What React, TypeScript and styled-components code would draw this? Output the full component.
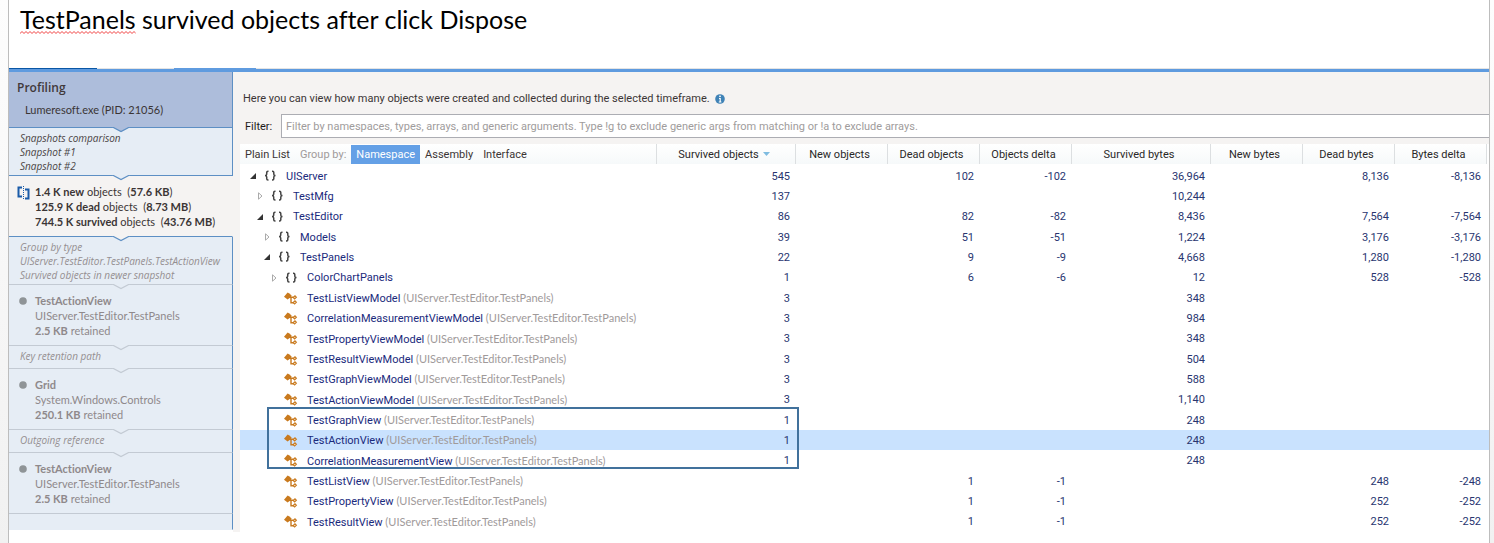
import React from "react";
import styled, { createGlobalStyle } from "styled-components";

const GlobalStyle = createGlobalStyle`
  *, *::before, *::after { box-sizing: border-box; }
  body {
    margin: 0;
    background: linear-gradient(#fdfdfd, #f1f1f1);
    color: #3b3535;
    font: 11px/15px Roboto, "Open Sans", sans-serif;
    font-variant-ligatures: none;
  }
  button, input { font: inherit; color: inherit; }
`;

const Slide = styled.div`
  min-height: 100vh;
  margin: 0 4px 0 8px;
  background: #fff;
  border: solid #bdbdbd;
  border-width: 0 1px;
`;

const TitleBar = styled.header`
  height: 68px;
  padding: 3px 11px;
`;

const Title = styled.h1`
  margin: 0;
  color: #000;
  font: 400 25px/32px Lato, "Open Sans", sans-serif;
  font-variant-ligatures: none;
`;

const Misspelled = styled.span`
  position: relative;
`;

const Squiggle = styled.svg`
  position: absolute;
  left: 0;
  bottom: 0;
  width: 100%;
  height: 3px;
`;

const TabStrip = styled.div`
  display: flex;
  height: 4px;
  background: #e4e4e4;
  border-bottom: 3px solid #5f9bdf;
`;

const TabMark = styled.span<{ $color: string; $width: number }>`
  width: ${(p) => p.$width}px;
  background: ${(p) => p.$color};
`;

const Workspace = styled.div`
  display: flex;
  align-items: flex-start;
`;

const Sidebar = styled.aside`
  flex: 0 0 224px;
`;

type Tone = "head" | "step" | "current";

const toneFill: Record<Tone, string> = {
  head: "#adbddb",
  step: "#e6edf5",
  current: "#f5f3f2",
};

const Step = styled.section<{ $tone: Tone; $height: number; $line: string }>`
  position: relative;
  height: ${(p) => p.$height}px;
  background: ${(p) => toneFill[p.$tone]};
  border-bottom: 1px solid ${(p) => p.$line};
  border-right: 1px solid ${(p) => (p.$tone === "current" ? toneFill.current : "#5d8fc4")};
`;

const Notch = styled.svg`
  position: absolute;
  z-index: 1;
  left: 50%;
  top: 100%;
  width: 20px;
  height: 6px;
  margin-left: -10px;
`;

const Caption = styled.p<{ $muted?: boolean }>`
  margin: 0;
  padding: 3px 11px;
  color: ${(p) => (p.$muted ? "#958f91" : "#4a4444")};
  font-family: "Open Sans", sans-serif;
  font-size: 10px;
  line-height: 14px;
  font-style: italic;
  white-space: nowrap;
`;

const ProfileTitle = styled.h2`
  margin: 0;
  padding: 7px 8px 0;
  color: #40383a;
  font: 600 12px/18px "Open Sans", sans-serif;
`;

const ProfileName = styled.p`
  margin: 0;
  padding: 5px 16px;
  font-family: Lato, "Open Sans", sans-serif;
`;

const Detail = styled.div<{ $muted?: boolean }>`
  display: flex;
  padding: 8px 8px 0;
  color: ${(p) => (p.$muted ? "#8f898b" : "#3b3535")};
  font-family: Lato, "Open Sans", sans-serif;
  white-space: nowrap;

  p { margin: 0; }
  b { font-weight: 700; }
`;

const Marker = styled.span`
  flex: 0 0 18px;
  padding: 2px 0;
  line-height: 0;
`;

const MarkerDot = styled.svg`
  margin-left: 2px;
`;

const Main = styled.main`
  flex: 1;
  min-width: 0;
  padding-left: 7px;
  background: #f5f3f2;
`;

const Hint = styled.p`
  display: flex;
  align-items: center;
  gap: 5px;
  margin: 0;
  padding: 19px 3px 8px;
`;

const FilterRow = styled.div`
  display: flex;
  align-items: center;
  padding-left: 5px;
  margin-bottom: 6px;
`;

const FilterLabel = styled.label`
  width: 36px;
  color: #1c1a1a;
`;

const FilterInput = styled.input`
  flex: 1;
  height: 24px;
  padding: 0 4px;
  background: #fff;
  border: 1px solid #acadb3;
  border-right: 0;
  border-radius: 0;
  outline: 0;

  &::placeholder { color: #a09c9c; opacity: 1; }
`;

const GridArea = styled.div`
  position: relative;
  background: #fff;
`;

const Grid = styled.table`
  width: 100%;
  table-layout: fixed;
  border-collapse: collapse;
  white-space: nowrap;
`;

const Col = styled.col<{ $width?: number }>`
  width: ${(p) => (p.$width ? `${p.$width}px` : "auto")};
`;

const HeadCell = styled.th`
  padding: 0 0 2px;
  font-weight: 400;
`;

const HeadInner = styled.div<{ $tools?: boolean }>`
  display: flex;
  align-items: center;
  justify-content: ${(p) => (p.$tools ? "flex-start" : "center")};
  height: 20px;
  padding-right: 4px;
  background: linear-gradient(#fff, #f6f9fa);
  border-right: 1px solid #dcdfe1;
`;

const SortButton = styled.button`
  display: flex;
  align-items: center;
  gap: 4px;
  padding: 0;
  background: none;
  border: 0;
  color: #2a2828;
`;

const ModeButton = styled.button<{ $active?: boolean }>`
  height: 19px;
  padding: 0 5px;
  border: 0;
  background: ${(p) => (p.$active ? "#64a0e6" : "transparent")};
  color: ${(p) => (p.$active ? "#fff" : "#3b3535")};
`;

const GroupLabel = styled.span`
  padding: 0 5px;
  color: #a09a9a;
`;

const Row = styled.tr<{ $selected?: boolean }>`
  height: 20px;
  background: ${(p) => (p.$selected ? "#c9e2fe" : "transparent")};

  &:nth-child(3n) { height: 21px; }
`;

const NameCell = styled.td`
  padding: 0;
`;

const NameInner = styled.div<{ $level: number }>`
  display: flex;
  align-items: center;
  padding-left: ${(p) => 9 + p.$level * 7}px;
  color: #1a2a7c;
`;

const Expander = styled.button`
  flex: 0 0 14px;
  height: 12px;
  padding: 0;
  border: 0;
  background: none;
  line-height: 0;
  text-align: left;
`;

const Spacer = styled.span`
  flex: 0 0 14px;
`;

const IconSlot = styled.span`
  flex: 0 0 23px;
  line-height: 0;
`;

const Scope = styled.span`
  color: #a09a9a;
  font-family: Lato, "Open Sans", sans-serif;
`;

const ValueCell = styled.td`
  padding: 0 6px 0 0;
  text-align: right;
  color: #28356f;
`;

const Callout = styled.div`
  position: absolute;
  left: 27px;
  top: 263px;
  width: 532px;
  height: 62px;
  border: 2px solid #41719c;
  pointer-events: none;
`;

const BLUE = "#5d8fc4";
const GREY = "#c3cad3";

function StepBlock({ tone = "step", height, line = GREY, last, children }: {
  tone?: Tone; height: number; line?: string; last?: boolean; children: React.ReactNode;
}) {
  return (
    <Step $tone={tone} $height={height} $line={line}>
      {children}
      {!last && (
        <Notch viewBox="0 0 20 6" aria-hidden="true">
          <path d="M0 -1H20L19 0L10 5L1 0L0 -1Z" fill={toneFill[tone]} />
          <path d="M0.5 -0.5L10 4.6L19.5 -0.5" fill="none" stroke={line} strokeWidth="1.2" />
        </Notch>
      )}
    </Step>
  );
}

const Dot = () => (
  <MarkerDot width="8" height="11" viewBox="0 0 8 11" aria-hidden="true">
    <circle cx="4" cy="6" r="3.8" fill="#8f9497" />
  </MarkerDot>
);

const CompareIcon = () => (
  <svg width="13" height="14" viewBox="0 0 13 14" aria-hidden="true">
    <path d="M5 1.5H1.5V10.5H5" fill="none" stroke="#1a5ba8" strokeWidth="2" />
    <path d="M8 3.5H11.5V12.5H8" fill="none" stroke="#1a5ba8" strokeWidth="2" />
    <path d="M6.5 0V14" stroke="#1a5ba8" strokeDasharray="1 1" />
  </svg>
);

const InfoIcon = () => (
  <svg width="10" height="10" viewBox="0 0 10 10" aria-hidden="true">
    <circle cx="5" cy="5" r="4.8" fill="#3f82b6" />
    <path d="M4 4.5H5.2V8M3.8 8H6.4" fill="none" stroke="#fff" strokeWidth="1.2" />
    <rect x="4.2" y="1.6" width="1.6" height="1.5" fill="#fff" />
  </svg>
);

const SortArrow = () => (
  <svg width="7" height="5" viewBox="0 0 7 5" aria-hidden="true">
    <path d="M0 0H7L3.5 4Z" fill="#7fbce0" />
  </svg>
);

const OpenArrow = () => (
  <svg width="8" height="12" viewBox="0 0 8 12" aria-hidden="true">
    <path d="M7 3V9H1Z" fill="#333" />
  </svg>
);

const ClosedArrow = () => (
  <svg width="8" height="12" viewBox="0 0 8 12" aria-hidden="true">
    <path d="M2.5 2.8V9.2L6 6Z" fill="#fff" stroke="#aaa" />
  </svg>
);

const NamespaceIcon = () => (
  <svg width="14" height="12" viewBox="0 0 14 12" fill="none" stroke="#444" strokeWidth="1.5" aria-hidden="true">
    <path d="M5.5 1.2H5Q3.7 1.2 3.7 2.4V4.2Q3.7 5.5 2 5.5Q3.7 5.5 3.7 7V8.8Q3.7 10 5 10H5.5" />
    <path d="M9 1.2H9.5Q10.8 1.2 10.8 2.4V4.2Q10.8 5.5 12.5 5.5Q10.8 5.5 10.8 7V8.8Q10.8 10 9.5 10H9" />
  </svg>
);

const ClassIcon = () => (
  <svg width="14" height="13" viewBox="1 0 14 13" aria-hidden="true">
    <path d="M1 4.8L4.6 0.6L6.4 1.4L8.6 3.4L8 5L4.6 7.6Z" fill="#c97a1e" />
    <path d="M5 5.2H10.5M8 5V10.8H11" fill="none" stroke="#c97a1e" strokeWidth="1.4" />
    <path d="M9.4 5.4L12 2.9L14.2 5.2L11.6 7.7ZM9.4 10.5L12 8L14.2 10.3L11.6 12.8Z" fill="#c97a1e" />
    <path d="M11.1 5.5L12 4.7L12.6 5.3L11.7 6.1ZM11.1 10.6L12 9.8L12.6 10.4L11.7 11.2Z" fill="#fff" />
  </svg>
);

interface Entry {
  name: string;
  level: number;
  kind: "open" | "closed" | "class";
  values: string[];
  selected?: boolean;
}

const cls = (name: string, values: string[], selected = false): Entry =>
  ({ name, level: 3, kind: "class", values, selected });

const entries: Entry[] = [
  { name: "UIServer", level: 0, kind: "open", values: ["545", "", "102", "-102", "36,964", "", "8,136", "-8,136"] },
  { name: "TestMfg", level: 1, kind: "closed", values: ["137", "", "", "", "10,244", "", "", ""] },
  { name: "TestEditor", level: 1, kind: "open", values: ["86", "", "82", "-82", "8,436", "", "7,564", "-7,564"] },
  { name: "Models", level: 2, kind: "closed", values: ["39", "", "51", "-51", "1,224", "", "3,176", "-3,176"] },
  { name: "TestPanels", level: 2, kind: "open", values: ["22", "", "9", "-9", "4,668", "", "1,280", "-1,280"] },
  { name: "ColorChartPanels", level: 3, kind: "closed", values: ["1", "", "6", "-6", "12", "", "528", "-528"] },
  cls("TestListViewModel", ["3", "", "", "", "348", "", "", ""]),
  cls("CorrelationMeasurementViewModel", ["3", "", "", "", "984", "", "", ""]),
  cls("TestPropertyViewModel", ["3", "", "", "", "348", "", "", ""]),
  cls("TestResultViewModel", ["3", "", "", "", "504", "", "", ""]),
  cls("TestGraphViewModel", ["3", "", "", "", "588", "", "", ""]),
  cls("TestActionViewModel", ["3", "", "", "", "1,140", "", "", ""]),
  cls("TestGraphView", ["1", "", "", "", "248", "", "", ""]),
  cls("TestActionView", ["1", "", "", "", "248", "", "", ""], true),
  cls("CorrelationMeasurementView", ["1", "", "", "", "248", "", "", ""]),
  cls("TestListView", ["", "", "1", "-1", "", "", "248", "-248"]),
  cls("TestPropertyView", ["", "", "1", "-1", "", "", "252", "-252"]),
  cls("TestResultView", ["", "", "1", "-1", "", "", "252", "-252"]),
];

const columns = [
  { title: "Survived objects", width: 139 },
  { title: "New objects", width: 92 },
  { title: "Dead objects", width: 92 },
  { title: "Objects delta", width: 92 },
  { title: "Survived bytes", width: 139 },
  { title: "New bytes", width: 92 },
  { title: "Dead bytes", width: 92 },
  { title: "Bytes delta", width: 92 },
];

function Retained({ name, scope, size }: { name: string; scope: string; size: string }) {
  return (
    <Detail $muted>
      <Marker><Dot /></Marker>
      <div>
        <p><b>{name}</b></p>
        <p>{scope}</p>
        <p><b>{size}</b> retained</p>
      </div>
    </Detail>
  );
}

function History() {
  return (
    <Sidebar>
      <StepBlock tone="head" height={56} line={BLUE}>
        <ProfileTitle>Profiling</ProfileTitle>
        <ProfileName>Lumeresoft.exe (PID: 21056)</ProfileName>
      </StepBlock>
      <StepBlock height={48} line={BLUE}>
        <Caption>Snapshots comparison<br />Snapshot #1<br />Snapshot #2</Caption>
      </StepBlock>
      <StepBlock tone="current" height={61} line={BLUE}>
        <Detail>
          <Marker><CompareIcon /></Marker>
          <div>
            <p><b>1.4 K new</b> objects &nbsp;(<b>57.6 KB</b>)</p>
            <p><b>125.9 K dead</b> objects &nbsp;(<b>8.73 MB</b>)</p>
            <p><b>744.5 K survived</b> objects &nbsp;(<b>43.76 MB</b>)</p>
          </div>
        </Detail>
      </StepBlock>
      <StepBlock height={48}>
        <Caption $muted>
          Group by type<br />UIServer.TestEditor.TestPanels.TestActionView<br />Survived objects in newer snapshot
        </Caption>
      </StepBlock>
      <StepBlock height={61}>
        <Retained name="TestActionView" scope="UIServer.TestEditor.TestPanels" size="2.5 KB" />
      </StepBlock>
      <StepBlock height={23}>
        <Caption $muted>Key retention path</Caption>
      </StepBlock>
      <StepBlock height={61}>
        <Retained name="Grid" scope="System.Windows.Controls" size="250.1 KB" />
      </StepBlock>
      <StepBlock height={23}>
        <Caption $muted>Outgoing reference</Caption>
      </StepBlock>
      <StepBlock height={61} last>
        <Retained name="TestActionView" scope="UIServer.TestEditor.TestPanels" size="2.5 KB" />
      </StepBlock>
      <StepBlock height={16} line={toneFill.step} last>{null}</StepBlock>
    </Sidebar>
  );
}

function EntryRow({ entry }: { entry: Entry }) {
  const isClass = entry.kind === "class";
  return (
    <Row $selected={entry.selected}>
      <NameCell>
        <NameInner $level={entry.level}>
          {isClass ? <Spacer /> : (
            <Expander aria-label={`Toggle ${entry.name}`} aria-expanded={entry.kind === "open"}>
              {entry.kind === "open" ? <OpenArrow /> : <ClosedArrow />}
            </Expander>
          )}
          <IconSlot>{isClass ? <ClassIcon /> : <NamespaceIcon />}</IconSlot>
          <span>
            {entry.name}
            {isClass && <Scope> (UIServer.TestEditor.TestPanels)</Scope>}
          </span>
        </NameInner>
      </NameCell>
      {entry.values.map((value, i) => <ValueCell key={i}>{value}</ValueCell>)}
      <td />
    </Row>
  );
}

export default function App() {
  return (
    <>
      <GlobalStyle />
      <Slide>
        <TitleBar>
          <Title>
            <Misspelled>
              TestPanels
              <Squiggle aria-hidden="true">
                <defs>
                  <pattern id="wave" width="4" height="3" patternUnits="userSpaceOnUse">
                    <path d="M-1 1.5L0 2.5L2 0.5L4 2.5L5 1.5" fill="none" stroke="#f04040" />
                  </pattern>
                </defs>
                <rect width="100%" height="3" fill="url(#wave)" />
              </Squiggle>
            </Misspelled>{" "}
            survived objects after click Dispose
          </Title>
        </TitleBar>
        <TabStrip>
          <TabMark $color="#0a57a5" $width={88} />
          <TabMark $color="transparent" $width={77} />
          <TabMark $color="#5f9bdf" $width={82} />
        </TabStrip>
        <Workspace>
          <History />
          <Main>
            <Hint>
              Here you can view how many objects were created and collected during the selected timeframe.
              <InfoIcon />
            </Hint>
            <FilterRow>
              <FilterLabel htmlFor="filter">Filter:</FilterLabel>
              <FilterInput
                id="filter"
                placeholder="Filter by namespaces, types, arrays, and generic arguments. Type !g to exclude generic args from matching or !a to exclude arrays."
              />
            </FilterRow>
            <GridArea>
              <Grid>
                <colgroup>
                  <Col />
                  {columns.map((c) => <Col key={c.title} $width={c.width} />)}
                  <Col $width={2} />
                </colgroup>
                <thead>
                  <tr>
                    <HeadCell>
                      <HeadInner $tools>
                        <ModeButton>Plain List</ModeButton>
                        <GroupLabel>Group by:</GroupLabel>
                        <ModeButton $active>Namespace</ModeButton>
                        <ModeButton>Assembly</ModeButton>
                        <ModeButton>Interface</ModeButton>
                      </HeadInner>
                    </HeadCell>
                    {columns.map((c, i) => (
                      <HeadCell key={c.title} aria-sort={i === 0 ? "descending" : undefined}>
                        <HeadInner>
                          <SortButton>{c.title}{i === 0 && <SortArrow />}</SortButton>
                        </HeadInner>
                      </HeadCell>
                    ))}
                    <td />
                  </tr>
                </thead>
                <tbody>
                  {entries.map((entry) => <EntryRow key={entry.name} entry={entry} />)}
                </tbody>
              </Grid>
              <Callout />
            </GridArea>
          </Main>
        </Workspace>
      </Slide>
    </>
  );
}
